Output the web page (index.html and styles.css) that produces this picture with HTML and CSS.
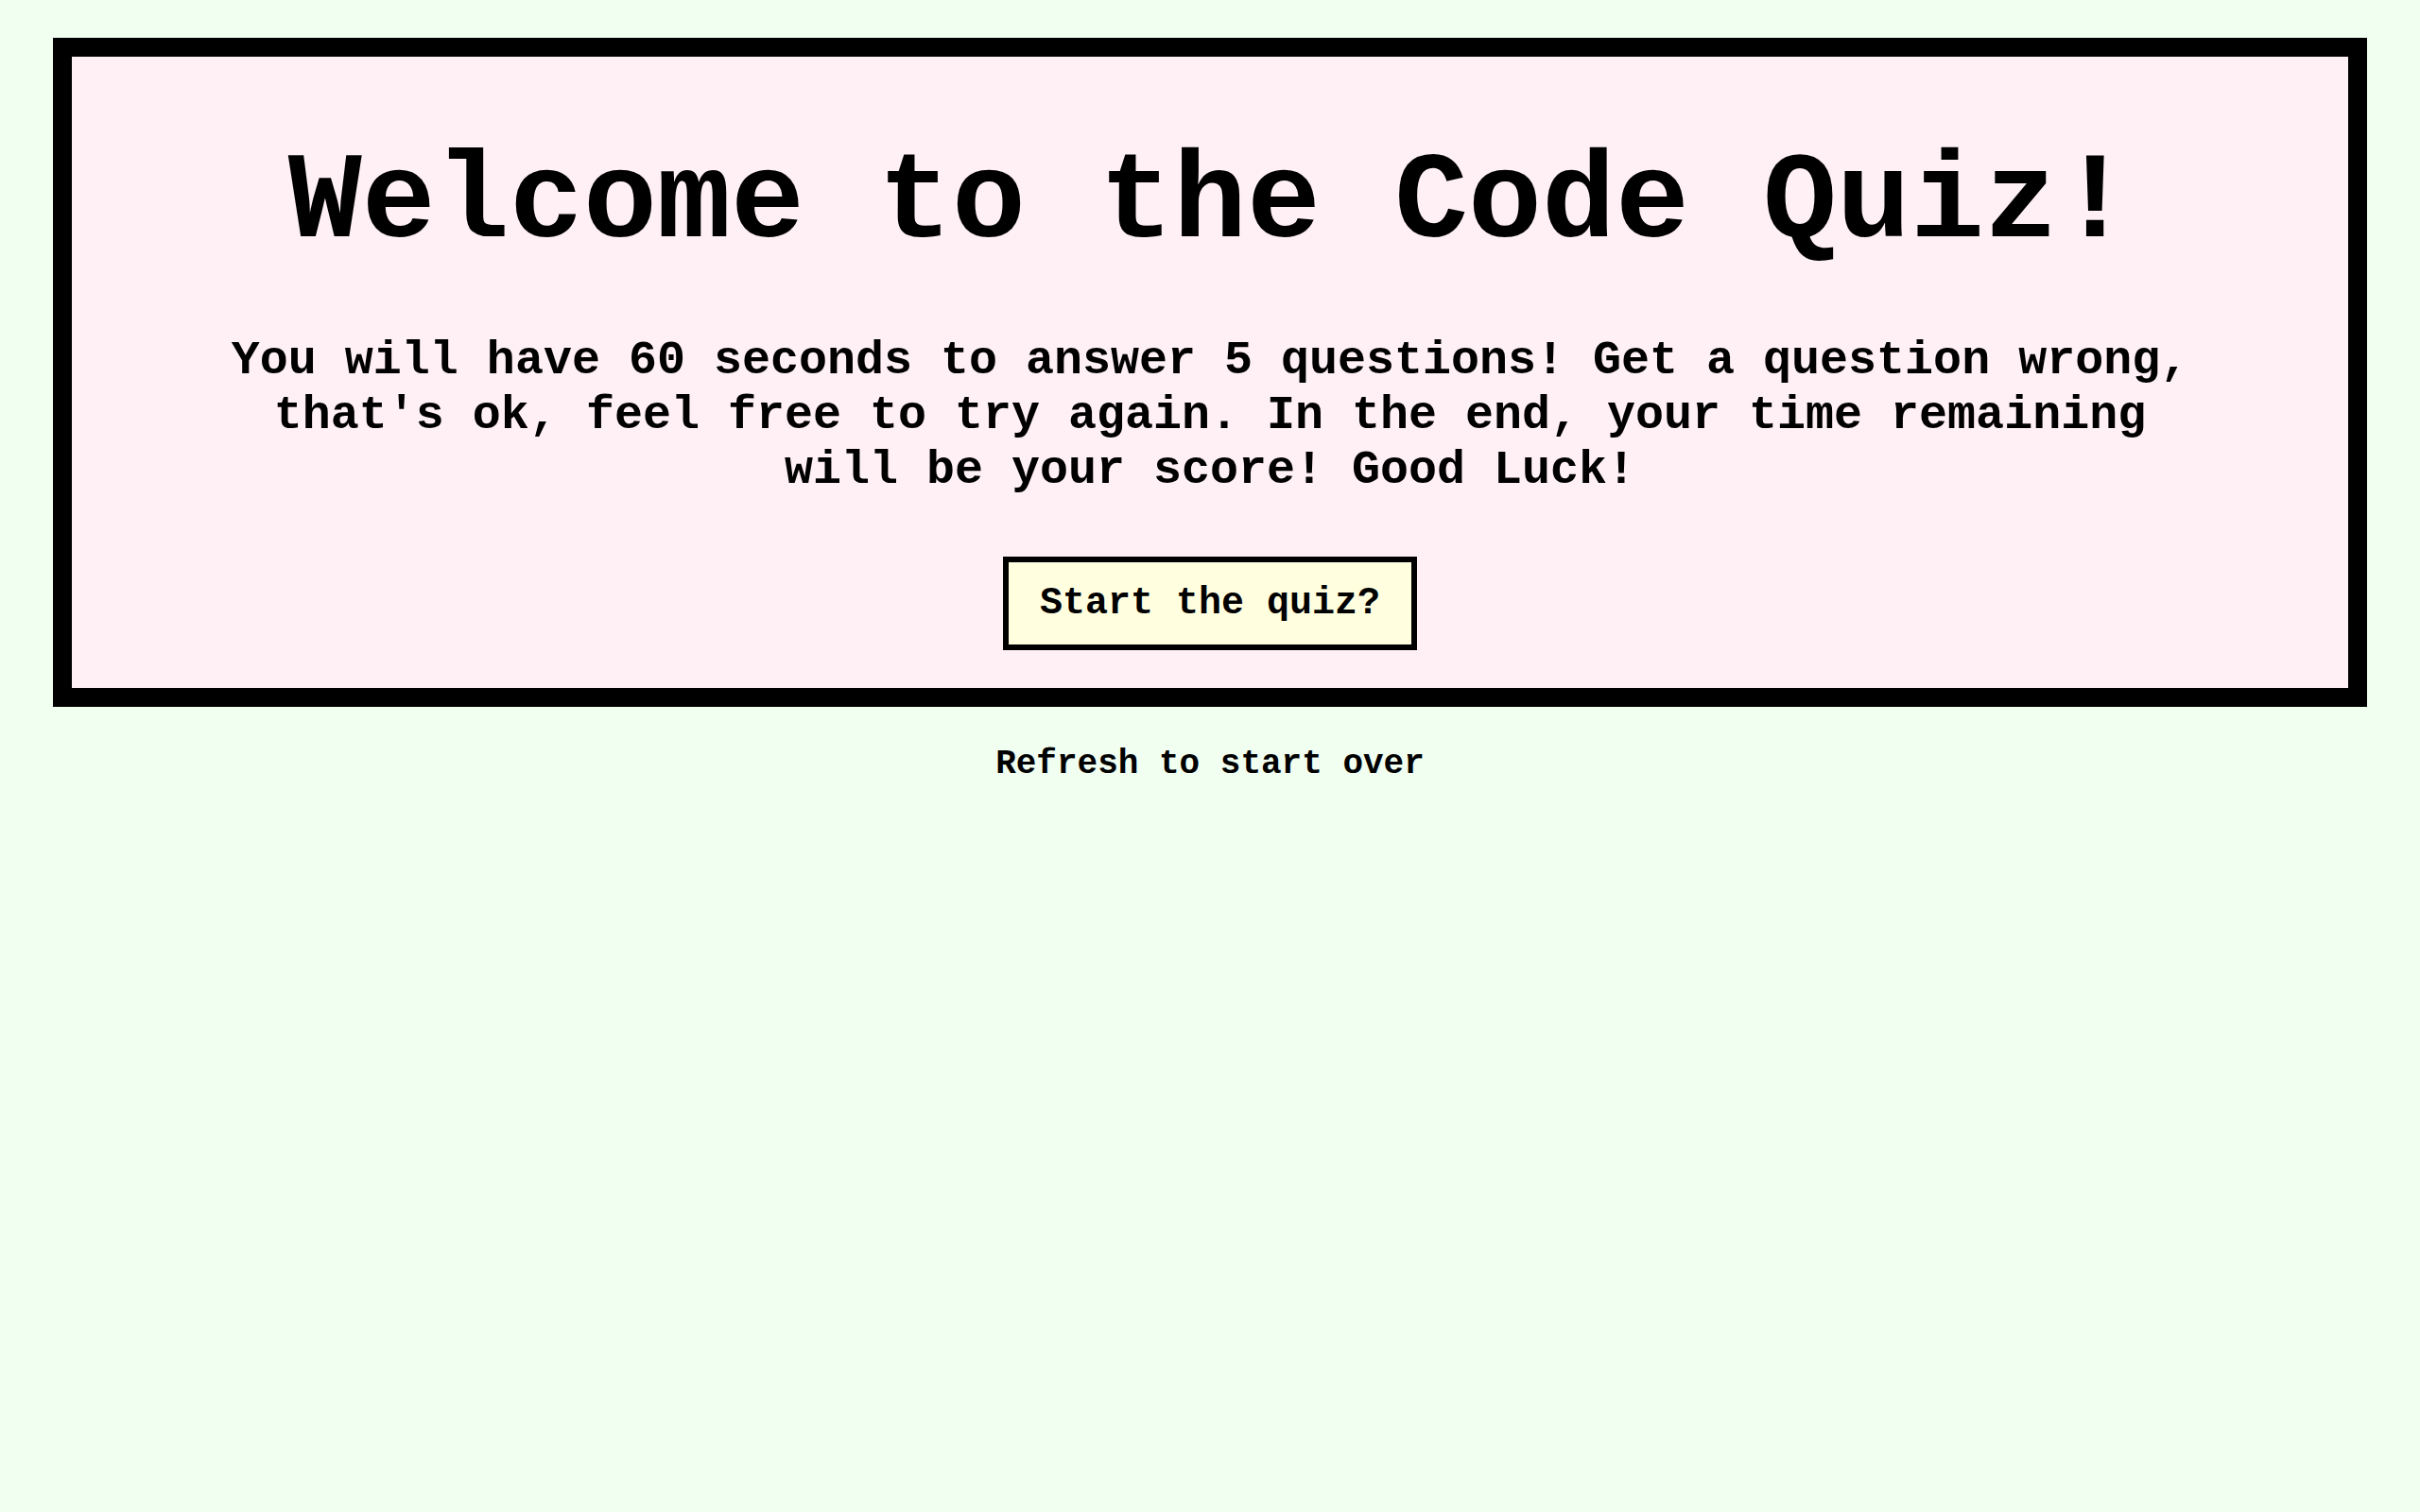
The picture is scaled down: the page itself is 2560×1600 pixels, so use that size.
FILE: index.html
```html
<!DOCTYPE html>
<html>
<head>
<meta charset="utf-8">
<title>Code Quiz</title>
<link rel="stylesheet" href="styles.css">
</head>
<body>
<main class="card">
  <h1 class="title">Welcome to the Code Quiz!</h1>
  <p class="intro">You will have 60 seconds to answer 5 questions! Get a question wrong, that's ok, feel free to try again. In the end, your time remaining will be your score! Good Luck!</p>
  <button class="start">Start the quiz?</button>
</main>
<p class="refresh">Refresh to start over</p>
</body>
</html>
```
FILE: styles.css
```css
html, body {
  margin: 0;
  padding: 0;
  background: #f0fff0;
  font-family: "Courier New", Courier, "Liberation Mono", monospace;
  color: #000;
}
body {
  padding: 40px 56px;
}
.card {
  background: #fff0f5;
  border: 20px solid #000;
  display: flex;
  flex-direction: column;
  align-items: center;
  box-sizing: border-box;
  height: 708px;
}
.title {
  font-size: 130px;
  font-weight: bold;
  margin: 91px 0 0;
  line-height: 1;
}
.intro {
  font-size: 50px;
  font-weight: bold;
  text-align: center;
  max-width: 2100px;
  margin: 72px 0 0;
  line-height: 58px;
}
.start {
  font-family: inherit;
  font-size: 40px;
  font-weight: bold;
  background: #ffffe0;
  border: 6px solid #000;
  width: 438px;
  height: 99px;
  margin-top: 62px;
  color: #000;
}
.refresh {
  text-align: center;
  font-size: 36px;
  font-weight: bold;
  margin: 40px 0 0;
}
```
